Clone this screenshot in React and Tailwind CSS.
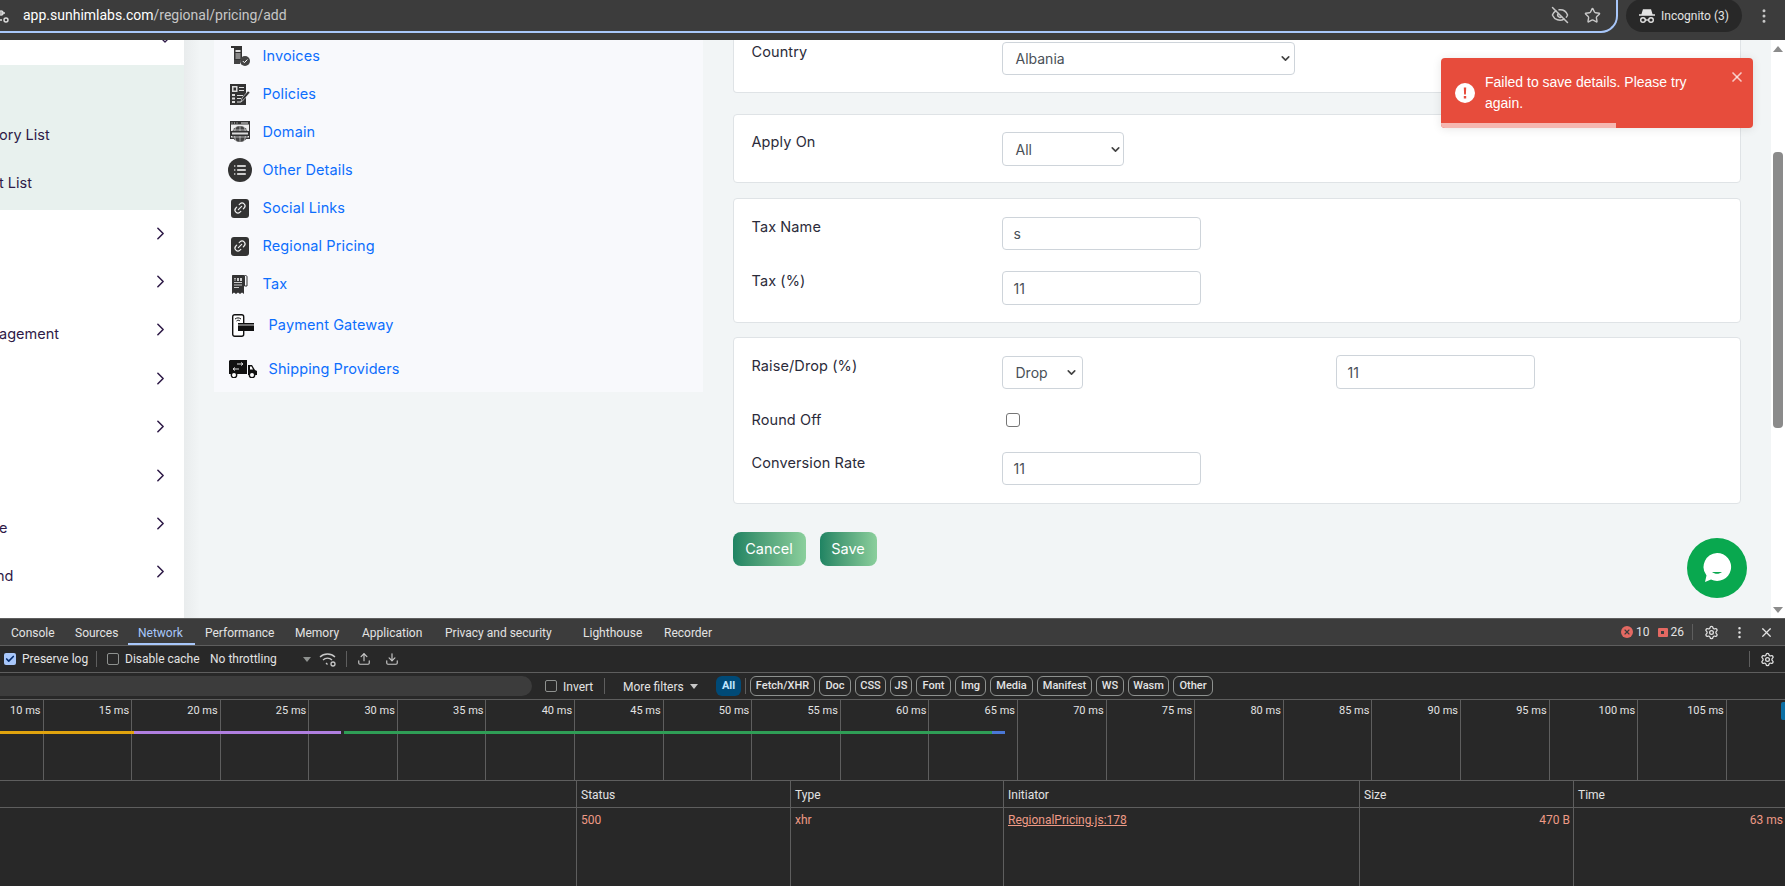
import { ChevronRight, ChevronDown, EyeOff, Star, Settings, X, MoreVertical, Upload, Download, Link2, List, Check } from "lucide-react";

const poppins = "font-['Inter','Noto_Sans',sans-serif]";
const ui = "font-['Roboto','Noto_Sans',sans-serif]";

const sideRows = ["", "", "agement", "", "", "", "e", "nd"];

function Sidebar() {
  return (
    <div className="w-[184px] shrink-0 bg-white overflow-hidden flex flex-col">
      <div className="h-[25px] shrink-0 flex justify-end pr-[11px] overflow-hidden">
        <ChevronDown size={16} strokeWidth={2} className="text-[#2e1a47] -mt-[8px]" />
      </div>
      <div className="h-[145px] -mb-[1px] shrink-0 bg-[#e8f1ee] flex flex-col pt-[58px] gap-[24px] text-[14.5px] leading-[24px] text-[#2e1a47]">
        <span className="-ml-[1px]">ory List</span>
        <span className="-ml-[1px]">t List</span>
      </div>
      {sideRows.map((t, i) => (
        <div key={i} className="h-[48.4px] shrink-0 flex items-center justify-between pr-[13px] text-[14.5px] text-[#2e1a47]">
          <span className={t === "nd" ? "pt-[8px] -ml-[4px]" : "pt-[8px] -ml-[1px]"}>{t}</span>
          <ChevronRight size={21} strokeWidth={1.8} className="text-[#2e1a47]" />
        </div>
      ))}
    </div>
  );
}

function InvoiceIcon() {
  return (
    <svg width="20" height="20" viewBox="0 0 20 20">
      <path d="M1 0h11v14H4V2H1z" fill="#333" />
      <path d="M5.500 4h5v2h-5zM5.500 7.500h5v1h-5zM5.500 9.500h5v1h-5zM5.500 11.500h5v1h-5z" fill="#ddd" />
      <path d="M4 14h6v4H4z" fill="#444" />
      <circle cx="15" cy="15" r="5" fill="#444" />
      <path d="M12.800 15l1.600 1.700 3-3.200" fill="none" stroke="#fff" strokeWidth="1" />
    </svg>
  );
}

function PolicyIcon() {
  return (
    <svg width="20" height="21" viewBox="0 0 20 21">
      <path d="M0 0h16v21H0z" fill="#333" />
      <path d="M2 2h5.500v6H2z" fill="#ddd" />
      <path d="M3.500 3.500h2.500v3H3.500z" fill="#333" />
      <path d="M9 3h5v1H9zM9 6h5v1H9zM2 10h3v2H2zM2 13.500h3v2H2zM2 17h3v2H2zM7 11h6v1H7zM7 14h4v1H7zM7 17.500h4v1H7z" fill="#ddd" />
      <path d="M11 18l1-4 6-7 2 1.500-6 7z" fill="#333" stroke="#f8f9fc" strokeWidth=".6" />
    </svg>
  );
}

function DomainIcon() {
  return (
    <svg width="20" height="22" viewBox="0 0 20 22">
      <path d="M0 0h20v18H0z" fill="#333" />
      <path d="M1 3.500h18v13H1z" fill="#eee" />
      <path d="M1.500 1.500h1v1h-1zM4 1.500h1v1H4zM6.500 1.500h1v1h-1zM11 1.500h7v1h-7z" fill="#ddd" />
      <circle cx="10" cy="13" r="8" fill="#444" />
      <path d="M2 12h16M3 9h14M3 16h14M10 5v16M6 6c-2 4-2 10 0 14M14 6c2 4 2 10 0 14" stroke="#eee" strokeWidth=".6" fill="none" />
      <path d="M0 10h20v5H0z" fill="#333" />
      <path d="M2 11.500h16v2H2z" fill="#ddd" />
    </svg>
  );
}

function LinkSquare() {
  return (
    <div className="w-[18px] h-[19px] rounded-[3px] bg-[#333] flex items-center justify-center ml-[1px]">
      <Link2 size={14} strokeWidth={2} className="text-[#eee] -rotate-45" />
    </div>
  );
}

function TaxIcon() {
  return (
    <svg width="16" height="19" viewBox="0 0 16 19">
      <path d="M0 1c0-.600.400-1 1-1h11v19l-2-1.500-2 1.500-2-1.500-2 1.500-2-1.500-2 1.500z" fill="#333" />
      <path d="M12.500 .500h1c1 0 1.500.6 1.500 1.500V11h-2.500z" fill="#f8f9fc" stroke="#333" strokeWidth="1" />
      <path d="M2 7h8v1H2zM2 9.500h8v1H2zM2 12h5v1H2z" fill="#ccc" />
      <path d="M2 3h2v.800H3.400V6H2.600V3.800H2zM5 3h2v3H5zM8 3h2v3H8z" fill="#ccc" />
    </svg>
  );
}

function PayIcon() {
  return (
    <svg width="22" height="23" viewBox="0 0 22 23">
      <rect x=".7" y=".7" width="11" height="21.600" rx="2" fill="#fff" stroke="#111" strokeWidth="1.400" />
      <path d="M3 5c2-1.500 4-1.500 6 0M4.500 7c1-1 2.500-1 3.500 0" stroke="#111" strokeWidth="1" fill="none" />
      <path d="M6 9h16v8H6z" fill="#111" />
      <path d="M6 11h16" stroke="#fff" strokeWidth=".8" />
    </svg>
  );
}

function TruckIcon() {
  return (
    <svg width="28" height="18" viewBox="0 0 28 18">
      <path d="M1 0h17v14H0V1z" fill="#111" />
      <path d="M19 5h4l3 5 2 1v4H19z" fill="#111" />
      <path d="M21 6.500h1.500l1.500 3h-3z" fill="#fff" />
      <path d="M8 4h6M12 2.500l2 1.500-2 1.500M4 9h6M6 7.500L4 9l2 1.500" stroke="#ddd" strokeWidth="1" fill="none" />
      <circle cx="5" cy="15" r="2.700" fill="#fff" stroke="#111" strokeWidth="1.400" />
      <circle cx="23" cy="15" r="2.700" fill="#fff" stroke="#111" strokeWidth="1.400" />
    </svg>
  );
}

const links = [
  { label: "Invoices", icon: <InvoiceIcon />, h: "h-[32px] mb-[3px]" },
  { label: "Policies", icon: <PolicyIcon />, h: "h-[38px]" },
  { label: "Domain", icon: <DomainIcon />, h: "h-[38px]" },
  {
    label: "Other Details",
    icon: (
      <div className="w-[24px] h-[24px] rounded-full bg-[#333] flex items-center justify-center -ml-[2px] mr-[-2px]">
        <List size={14} strokeWidth={2.5} className="text-white" />
      </div>
    ),
    h: "h-[38px]",
  },
  { label: "Social Links", icon: <LinkSquare />, h: "h-[38px]" },
  { label: "Regional Pricing", icon: <LinkSquare />, h: "h-[38px]" },
  { label: "Tax", icon: <div className="ml-[2px]"><TaxIcon /></div>, h: "h-[38px]" },
  { label: "Payment Gateway", icon: <div className="ml-[2px]"><PayIcon /></div>, h: "h-[44px]", wide: true },
  { label: "Shipping Providers", icon: <div className="-ml-[1px]"><TruckIcon /></div>, h: "h-[44px]", wide: true },
];

function LeftPanel() {
  return (
    <div className="w-[489px] h-[352px] bg-[#f8f9fc] shrink-0 flex flex-col pl-[16px]">
      {links.map((l) => (
        <div key={l.label} className={`${l.h} flex items-center shrink-0`}>
          <div className={l.wide ? "w-[39px] shrink-0 flex" : "w-[33px] shrink-0 flex"}>{l.icon}</div>
          <a className="text-[14.5px] text-[#0d6efd] tracking-[0.1px]">{l.label}</a>
        </div>
      ))}
    </div>
  );
}

const card = "bg-white border border-[#dfe3e6] rounded-[4px] pl-[18px] shrink-0 relative";
const labelCls = "w-[250px] shrink-0 text-[14.5px] text-[#2b2b3a] tracking-[0.1px]";
const inputCls = "h-[33px] border border-[#ced4da] rounded-[4px] bg-white px-[11px] flex items-center text-[14px] text-[#495057]";

function Sel({ value, w, arrow = "-mr-[9px]" }) {
  return (
    <div className={`${inputCls} justify-between ${w}`}>
      <span className="pl-[2px]">{value}</span>
      <ChevronDown size={13} strokeWidth={3} className={`text-[#444] ${arrow}`} />
    </div>
  );
}

function FormColumn() {
  return (
    <div className="w-[1008px] shrink-0 flex flex-col ml-[30px] h-full">
      <div className={`${card} h-[53px] border-t-0 rounded-t-none flex items-start`}>
        <span className={`${labelCls} pt-[1px]`}>Country</span>
        <Sel value="Albania" w="w-[293px] mt-[2px]" />
      </div>
      <div className={`${card} h-[69px] mt-[21px] flex items-start pt-[17px]`}>
        <span className={`${labelCls} -mt-[1px]`}>Apply On</span>
        <Sel value="All" w="w-[122px] h-[34px]" arrow="-mr-[10px]" />
      </div>
      <div className={`${card} h-[125px] mt-[15px] pt-[18px] flex flex-col`}>
        <div className="flex">
          <span className={`${labelCls} -mt-[1px]`}>Tax Name</span>
          <div className={`${inputCls} w-[199px]`}>s</div>
        </div>
        <div className="flex mt-[21px]">
          <span className={`${labelCls} -mt-[1px]`}>Tax (%)</span>
          <div className={`${inputCls} w-[199px] h-[34px]`}>11</div>
        </div>
      </div>
      <div className={`${card} h-[167px] mt-[14px] pt-[18px] flex flex-col`}>
        <div className="flex">
          <span className={`${labelCls} -mt-[1px]`}>Raise/Drop (%)</span>
          <Sel value="Drop" w="w-[81px] h-[33px]" arrow="-mr-[7px]" />
          <div className={`${inputCls} w-[199px] h-[34px] ml-[253px] -mt-[1px]`}>11</div>
        </div>
        <div className="flex mt-[20px] items-center">
          <span className={labelCls}>Round Off</span>
          <span className="block w-[14px] h-[14px] ml-[4px] border border-[#767676] rounded-[3px] bg-white" />
        </div>
        <div className="flex mt-[21px]">
          <span className={labelCls}>Conversion Rate</span>
          <div className={`${inputCls} w-[199px]`}>11</div>
        </div>
      </div>
      <div className="flex gap-[14px] mt-[28px]">
        <button className="w-[73px] h-[34px] rounded-[8px] text-white text-[14.5px] bg-gradient-to-r from-[#1f8463] to-[#8bcf9c]">Cancel</button>
        <button className="w-[57px] h-[34px] rounded-[8px] text-white text-[14.5px] bg-gradient-to-r from-[#1f8463] to-[#8bcf9c]">Save</button>
      </div>
    </div>
  );
}

function Toast() {
  return (
    <div className="absolute left-[1441px] top-[18px] w-[312px] h-[70px] rounded-[4px] bg-[#e74c3c] text-white shadow-[0_1px_10px_rgba(0,0,0,0.1)] overflow-hidden font-['Liberation_Sans',sans-serif] text-[14px] leading-[21px]">
      <div className="flex pl-[14px] pt-[14px]">
        <svg width="20" height="20" viewBox="0 0 20 20" className="mt-[11px] shrink-0">
          <circle cx="10" cy="10" r="10" fill="#fff" />
          <path d="M8.800 4.500h2.400l-.3 7h-1.800zM8.800 13h2.400v2.400H8.800z" fill="#e74c3c" />
        </svg>
        <p className="ml-[10px] w-[215px]">Failed to save details. Please try again.</p>
        <X size={16} strokeWidth={2.5} className="ml-[29px] -mt-[3px] text-white/70" />
      </div>
      <div className="absolute left-0 bottom-0 h-[5px] w-[175px] bg-[#f5b7b1]" />
    </div>
  );
}

function ChatBubble() {
  return (
    <div className="absolute left-[1687px] top-[498px] w-[60px] h-[60px] rounded-full bg-[#09a84f] flex items-center justify-center">
      <svg width="30" height="32" viewBox="0 0 30 32">
        <path d="M15 1a14 14 0 1 1-6 26.600L3 30l1.500-6.500A14 14 0 0 1 15 1z" fill="#fff" />
        <path d="M10 20c3 2.400 7 2.400 10 0z" fill="#09a84f" />
      </svg>
    </div>
  );
}

function Scrollbar() {
  return (
    <div className="w-[14px] shrink-0 ml-auto bg-white flex flex-col items-center">
      <div className="mt-[6px] w-0 h-0 border-l-[5px] border-r-[5px] border-b-[6px] border-l-transparent border-r-transparent border-b-[#8b8b8b]" />
      <div className="mt-[100px] w-[10px] h-[276px] bg-[#8b8b8b] rounded-[4px]" />
      <div className="mt-auto mb-[5px] w-0 h-0 border-l-[5px] border-r-[5px] border-t-[6px] border-l-transparent border-r-transparent border-t-[#8b8b8b]" />
    </div>
  );
}

function Page() {
  return (
    <div className={`relative h-[578px] flex bg-[#f2f5f6] overflow-hidden ${poppins}`}>
      <Sidebar />
      <div className="w-[16px] shrink-0 bg-gradient-to-r from-[#e9eced] to-[#f2f5f6] -mr-[16px]" />
      <div className="flex ml-[29.5px]">
        <LeftPanel />
        <FormColumn />
      </div>
      <Scrollbar />
      <ChatBubble />
    </div>
  );
}

function TopBar() {
  return (
    <div className={`h-[40px] shrink-0 bg-[#3c3c3c] flex items-start ${ui} relative`}>
      <div className="w-[1618px] h-[34px] -mt-[1px] border-b-2 border-r-2 border-[#a8c7fa] rounded-br-[17px] flex items-center pl-[23px] pr-[15px]">
        <svg width="10" height="14" viewBox="0 0 10 14" className="absolute left-0 top-[10px]">
          <path d="M0 3h5M0 10h2" stroke="#ddd" strokeWidth="1.400" />
          <circle cx="6" cy="10" r="2" fill="none" stroke="#ddd" strokeWidth="1.400" />
          <circle cx="1" cy="3" r="2" fill="none" stroke="#ddd" strokeWidth="1.400" />
        </svg>
        <span className="text-[14px] text-white">app.sunhimlabs.com<span className="text-[#c7c7c7]">/regional/pricing/add</span></span>
        <EyeOff size={18} className="ml-auto text-[#c7c7c7]" />
        <Star size={17} className="ml-[15px] text-[#c7c7c7]" />
      </div>
      <div className="ml-[8px] w-[116px] h-[33px] rounded-full bg-[#282828] flex items-center pl-[12px] -mt-[1px]">
        <svg width="18" height="16" viewBox="0 0 18 16" className="text-[#e3e3e3]">
          <path d="M1 7h16M4 7l1.500-5h7L14 7" stroke="currentColor" strokeWidth="1.500" fill="currentColor" />
          <circle cx="5" cy="12" r="2.300" fill="none" stroke="currentColor" strokeWidth="1.400" />
          <circle cx="13" cy="12" r="2.300" fill="none" stroke="currentColor" strokeWidth="1.400" />
          <path d="M7.300 12h3.400" stroke="currentColor" strokeWidth="1.400" />
        </svg>
        <span className="ml-[5px] text-[12px] text-[#e3e3e3]">Incognito (3)</span>
      </div>
      <MoreVertical size={18} className="ml-[13px] mt-[7px] text-[#c7c7c7]" />
    </div>
  );
}

const tabs = [
  ["Console", "w-[64px]"],
  ["Sources", "w-[63px]"],
  ["Network", "w-[67px] text-[#a8c7fa]"],
  ["Performance", "w-[90px]"],
  ["Memory", "w-[67px]"],
  ["Application", "w-[83px]"],
  ["Privacy and security", "w-[138px]"],
  ["Lighthouse", "w-[81px]"],
  ["Recorder", "w-[60px]"],
];

const filters = [
  ["Fetch/XHR", "w-[65px]"],
  ["Doc", "w-[32px]"],
  ["CSS", "w-[31px]"],
  ["JS", "w-[22px]"],
  ["Font", "w-[35px]"],
  ["Img", "w-[31px]"],
  ["Media", "w-[43px]"],
  ["Manifest", "w-[55px]"],
  ["WS", "w-[28px]"],
  ["Wasm", "w-[41px]"],
  ["Other", "w-[40px]"],
];
const ticks = [10, 15, 20, 25, 30, 35, 40, 45, 50, 55, 60, 65, 70, 75, 80, 85, 90, 95, 100, 105];

function Box() {
  return <span className="block w-[12px] h-[12px] rounded-[2px] border border-[#8e918f] shrink-0" />;
}

function TabBar() {
  return (
    <div className="h-[28px] shrink-0 bg-[#3c3c3c] border-t border-[#5e5e5e] border-b flex items-center pl-[11px] text-[12px] text-[#e3e3e3] relative">
      {tabs.map(([t, c]) => (
        <span key={t} className={`${c} shrink-0 pt-[2px]`}>{t}</span>
      ))}
      <div className="absolute left-[128px] w-[67px] bottom-0 h-[2px] bg-[#a8c7fa]" />
      <div className="ml-auto flex items-center pr-[11px]">
        <span className="w-[12px] h-[12px] rounded-full bg-[#e46962] flex items-center justify-center">
          <X size={8} strokeWidth={3.5} className="text-[#3c3c3c]" />
        </span>
        <span className="ml-[3px]">10</span>
        <span className="ml-[8px] w-[10px] h-[9px] bg-[#e46962] rounded-[1px] flex items-center justify-center">
          <span className="w-[3px] h-[3px] bg-[#3c3c3c]" />
        </span>
        <span className="ml-[3px]">26</span>
        <span className="ml-[8px] w-px h-[16px] bg-[#5e5e5e]" />
        <Settings size={15} className="ml-[11px]" />
        <MoreVertical size={15} className="ml-[13px]" />
        <X size={15} className="ml-[12px]" />
      </div>
    </div>
  );
}

function Toolbar() {
  return (
    <div className="h-[27px] shrink-0 bg-[#282828] border-b border-[#5e5e5e] flex items-center text-[12px] text-[#e3e3e3]">
      <span className="ml-[4px] w-[12px] h-[12px] rounded-[2px] bg-[#a8c7fa] flex items-center justify-center">
        <Check size={10} strokeWidth={4} className="text-[#062e6f]" />
      </span>
      <span className="ml-[6px] w-[74px]">Preserve log</span>
      <span className="w-px h-[16px] bg-[#5e5e5e]" />
      <span className="ml-[10px]"><Box /></span>
      <span className="ml-[6px] w-[85px]">Disable cache</span>
      <span className="w-[93px]">No throttling</span>
      <span className="w-0 h-0 border-l-[4px] border-r-[4px] border-t-[5px] border-l-transparent border-r-transparent border-t-[#8e918f]" />
      <svg width="18" height="16" viewBox="0 0 18 16" className="ml-[8px]">
        <path d="M1 6c4-4 11-4 15 0M4 9c2.500-2.500 6.500-2.500 9 0M7 12l1.500 1.500" stroke="#c7c7c7" strokeWidth="1.300" fill="none" />
        <circle cx="14" cy="13" r="2" fill="none" stroke="#c7c7c7" strokeWidth="1.300" />
      </svg>
      <span className="ml-[9px] w-px h-[16px] bg-[#5e5e5e]" />
      <Upload size={14} className="ml-[10px] text-[#c7c7c7]" />
      <Download size={14} className="ml-[14px] text-[#c7c7c7]" />
      <span className="ml-auto w-px h-[16px] bg-[#5e5e5e]" />
      <Settings size={15} className="ml-[10px] mr-[10px] text-[#e3e3e3]" />
    </div>
  );
}

function FilterBar() {
  return (
    <div className="h-[27px] shrink-0 bg-[#282828] border-b border-[#5e5e5e] flex items-center text-[12px] text-[#e3e3e3]">
      <div className="w-[532px] h-[20px] bg-[#3c3c3c] rounded-r-full shrink-0" />
      <span className="ml-[13px]"><Box /></span>
      <span className="ml-[6px] w-[41px] pt-[1px]">Invert</span>
      <span className="w-px h-[16px] bg-[#5e5e5e]" />
      <span className="ml-[18px] w-[67px] pt-[1px]">More filters</span>
      <span className="w-0 h-0 border-l-[4px] border-r-[4px] border-t-[5px] border-l-transparent border-r-transparent border-t-[#c7c7c7]" />
      <span className="ml-[18px] w-[25px] h-[20px] rounded-[6px] bg-[#004a77] text-[#c2e7ff] font-bold text-[11px] flex items-center justify-center">All</span>
      <span className="ml-[4px] w-px h-[16px] bg-[#5e5e5e]" />
      <div className="flex gap-[4px] ml-[4px]">
        {filters.map(([f, w]) => (
          <span key={f} className={`${w} h-[20px] rounded-[6px] border border-[#8e918f] font-medium text-[11px] flex items-center justify-center`}>{f}</span>
        ))}
      </div>
    </div>
  );
}

function Overview() {
  return (
    <div className="h-[80px] shrink-0 bg-[#282828] relative flex text-[11px] text-[#e3e3e3]">
      <div className="w-[43.5px] shrink-0 border-r border-[#5e5e5e] text-right pr-[2px] pt-[3px]">{ticks[0]} ms</div>
      {ticks.slice(1).map((t) => (
        <div key={t} className="w-[88.6px] shrink-0 border-r border-[#5e5e5e] text-right pr-[2px] pt-[3px]">{t} ms</div>
      ))}
      <div className="absolute left-0 top-[31px] flex h-[3px]">
        <div className="w-[134px] bg-[#e0a30e]" />
        <div className="w-[207px] bg-[#b07fe0]" />
        <div className="w-[3px]" />
        <div className="w-[648px] bg-[#2f9e56]" />
        <div className="w-[13px] bg-[#4a78d6]" />
      </div>
      <div className="absolute right-0 top-[2px] w-[4px] h-[18px] bg-[#0b6fa5] rounded-l-[2px]" />
    </div>
  );
}

const rowRed = "text-[#ee9a86]";
const cols = [
  { name: "Status", w: "w-[214px]", val: "500", c: rowRed },
  { name: "Type", w: "w-[213px]", val: "xhr", c: rowRed },
  { name: "Initiator", w: "w-[356px]", val: "RegionalPricing.js:178", c: `${rowRed} underline` },
  { name: "Size", w: "w-[214px]", val: "470 B", c: `${rowRed} text-right pr-[3px]` },
  { name: "Time", w: "w-[212px]", val: "63 ms", c: `${rowRed} text-right pr-[3px]` },
];

function NetTable() {
  return (
    <div className="flex-1 bg-[#282828] flex flex-col text-[12px] text-[#e3e3e3]">
      <div className="h-[28px] shrink-0 border-y border-[#5e5e5e] flex">
        <div className="w-[577px] shrink-0 border-r border-[#5e5e5e]" />
        {cols.map((c) => (
          <div key={c.name} className={`${c.w} shrink-0 border-r border-[#5e5e5e] pl-[4px] pt-[1px] flex items-center last:border-r-0`}>{c.name}</div>
        ))}
      </div>
      <div className="flex-1 flex">
        <div className="w-[577px] shrink-0 border-r border-[#5e5e5e]" />
        {cols.map((c) => (
          <div key={c.name} className={`${c.w} shrink-0 border-r border-[#5e5e5e] pl-[4px] pt-[3px] last:border-r-0 ${c.c}`}>{c.val}</div>
        ))}
      </div>
    </div>
  );
}

export default function App() {
  return (
    <div className="w-[1785px] h-[886px] overflow-hidden flex flex-col relative">
      <TopBar />
      <Page />
      <div className={`flex-1 flex flex-col ${ui}`}>
        <TabBar />
        <Toolbar />
        <FilterBar />
        <Overview />
        <NetTable />
      </div>
      <div className="absolute inset-x-0 top-[40px] pointer-events-none">
        <Toast />
      </div>
    </div>
  );
}
